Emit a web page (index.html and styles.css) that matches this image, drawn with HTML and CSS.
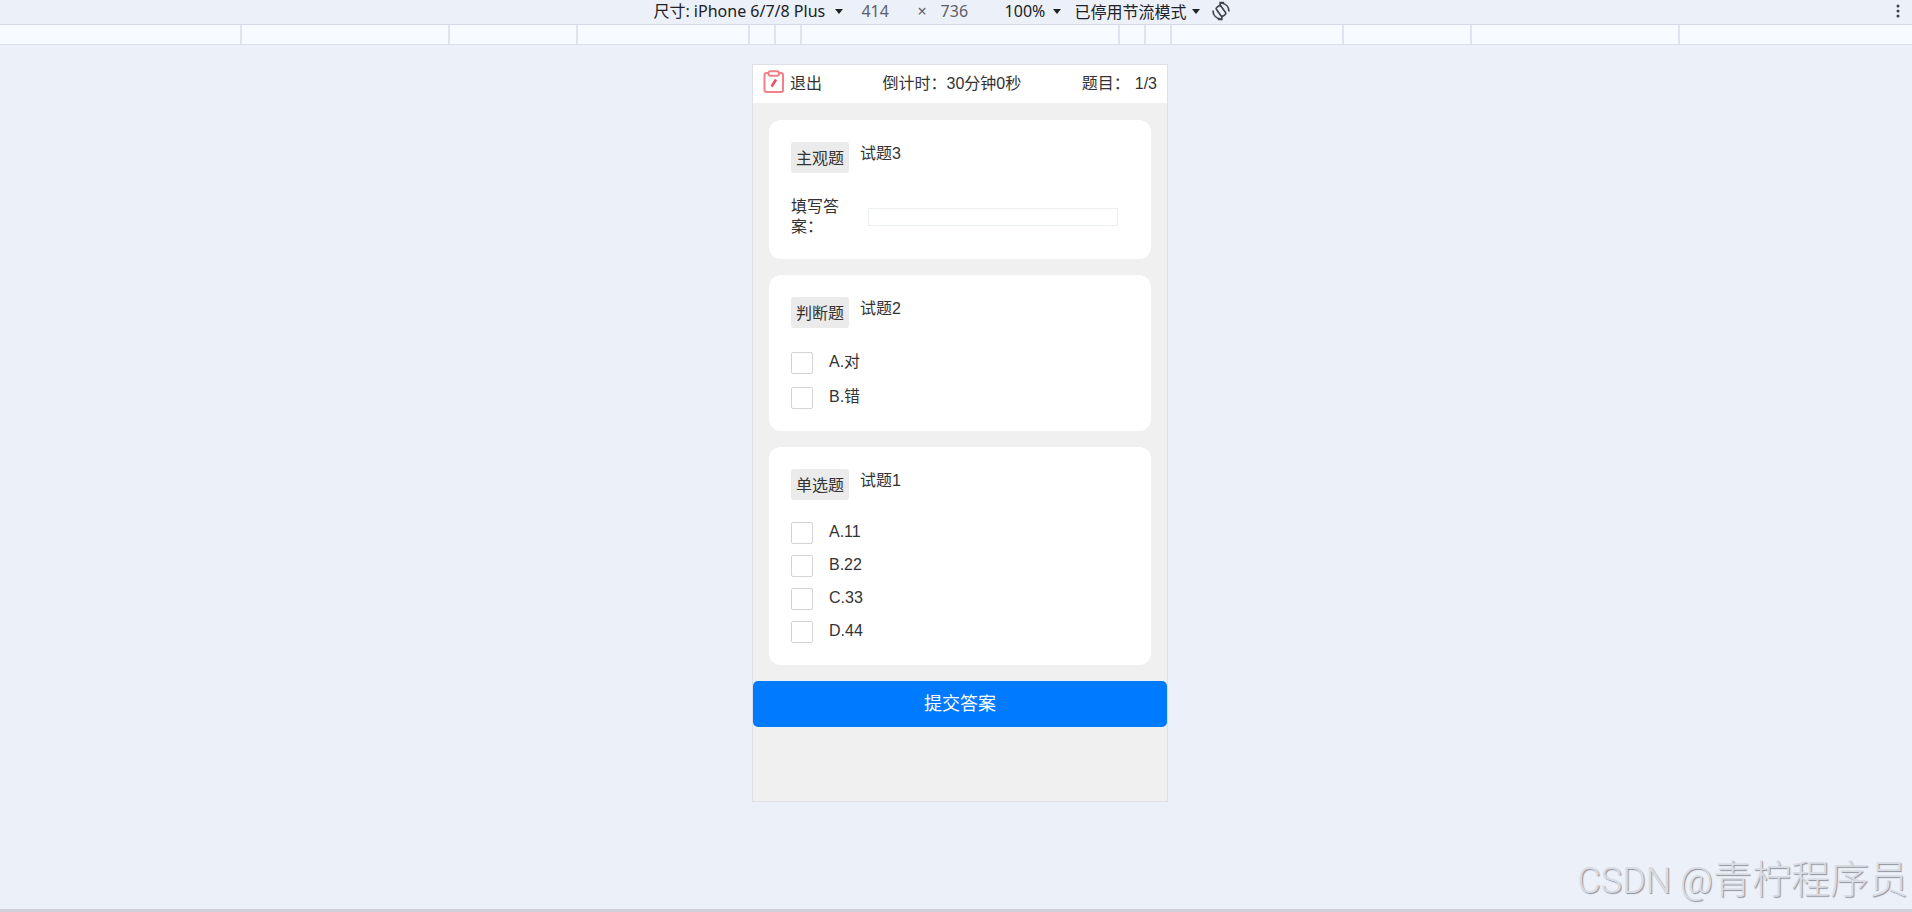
FILE: index.html
```
<!DOCTYPE html>
<html lang="zh-CN">
<head>
  <meta charset="UTF-8" />
  <meta name="viewport" content="width=device-width, initial-scale=1.0"/>
  <title>在线考试</title>
  <link rel="stylesheet" href="styles.css">
</head>
<body>
  <header class="toolbar">
    <span class="picker picker-device">
      <select aria-label="尺寸"><option>尺寸: iPhone 6/7/8 Plus</option></select>
    </span>
    <input class="size" type="text" value="414" aria-label="宽度">
    <span class="times">×</span>
    <input class="size" type="text" value="736" aria-label="高度">
    <span class="picker picker-zoom">
      <select aria-label="缩放"><option>100%</option></select>
    </span>
    <span class="picker picker-throttle">
      <select aria-label="节流"><option>已停用节流模式</option></select>
    </span>
    <button class="rotate" type="button" aria-label="旋转">
      <svg width="20" height="20" viewBox="0 0 20 20" fill="none" stroke="#41454c" stroke-width="1.7">
        <rect x="7.200" y="4.600" width="5.600" height="10.800" rx="1.500" transform="rotate(-35 10 10)"/>
        <path d="M2 9.500c0 4.500 3 8 8 8.500M10.800 14.200V18.300H6.800"/>
        <path d="M18 10.500c0-4.500-3-8-8-8.500M9.200 5.800V1.700H13.200"/>
      </svg>
    </button>
    <button class="more" type="button" aria-label="更多选项">
      <svg width="4" height="14" viewBox="0 0 4 14" fill="#3c4048">
        <circle cx="2" cy="2" r="1.500"/><circle cx="2" cy="7" r="1.500"/><circle cx="2" cy="12" r="1.500"/>
      </svg>
    </button>
  </header>

  <div class="ruler">
    <i class="laptop-l"></i><i class="laptop"></i><i class="tablet"></i><i class="mobile-l"></i><i class="mobile-m"></i><i class="mobile-m"></i>
    <i class="mobile-s"></i>
    <i class="mobile-m"></i><i class="mobile-m"></i><i class="mobile-l"></i><i class="tablet"></i><i class="laptop"></i><i class="laptop-l"></i>
  </div>

  <main class="stage">
    <div class="phone">
      <div class="exam-bar">
        <button class="exit" type="button">
          <svg width="22" height="24" viewBox="0 0 22 24" fill="none" stroke="#f0808a" stroke-width="2">
            <rect x="1.500" y="3" width="18.500" height="19" rx="2"/>
            <rect x="5.500" y="1.200" width="10.500" height="4.600" rx="2" fill="#fff"/>
            <path d="M13 9.500L8.600 16.500" stroke="#e8505e" stroke-width="2.600"/>
          </svg>
          退出
        </button>
        <span>倒计时：30分钟0秒</span>
        <span class="count">题目：<b>1/3</b></span>
      </div>

      <form class="questions">
        <section class="card">
          <div class="head"><span class="tag">主观题</span><span class="title">试题3</span></div>
          <div class="fill">
            <label for="answer">填写答案：</label>
            <input id="answer" type="text">
          </div>
        </section>

        <section class="card judge">
          <div class="head"><span class="tag">判断题</span><span class="title">试题2</span></div>
          <div class="options">
            <label><input type="checkbox">A.对</label>
            <label><input type="checkbox">B.错</label>
          </div>
        </section>

        <section class="card">
          <div class="head"><span class="tag">单选题</span><span class="title">试题1</span></div>
          <div class="options">
            <label><input type="checkbox">A.11</label>
            <label><input type="checkbox">B.22</label>
            <label><input type="checkbox">C.33</label>
            <label><input type="checkbox">D.44</label>
          </div>
        </section>

        <button class="submit" type="button">提交答案</button>
      </form>
    </div>
  </main>

  <div class="watermark">CSDN @<span>青柠程序员</span></div>
</body>
</html>
```
FILE: styles.css
```
* {
  box-sizing: border-box;
}

body {
  margin: 0;
  min-height: 100vh;
  display: flex;
  flex-direction: column;
  background: #ecf0f9;
  color: #333;
  font: 16px/20px "Liberation Sans", "Noto Sans CJK SC", sans-serif;
  border-bottom: 3px solid #d0d0dc;
}

button, input, select {
  margin: 0;
  padding: 0;
  border: none;
  background: none;
  color: inherit;
  font: inherit;
}

/* toolbar */
.toolbar {
  display: flex;
  align-items: center;
  justify-content: center;
  height: 25px;
  padding: 0 36px 2px 8px;
  border-bottom: 1px solid #d6dae8;
  font-family: "Noto Sans", "Noto Sans CJK SC", sans-serif;
  color: #202226;
  position: relative;
}

.picker {
  display: flex;
  align-items: center;
}

.picker select {
  appearance: none;
  flex: 1;
  min-width: 0;
  height: 22px;
}

.picker::after {
  content: "";
  border: 4px solid transparent;
  border-top: 5px solid #202226;
  border-bottom: none;
}

.picker-device {
  width: 190px;
}

.picker-zoom {
  width: 56px;
  margin-left: 34px;
}

.picker-throttle {
  width: 125px;
  margin-left: 14px;
  font-family: "Noto Sans CJK SC", sans-serif;
}

.size {
  width: 30px;
  height: 22px;
  margin-left: 18px;
  color: #5c6068;
}

.times {
  margin-left: 26px;
  color: #5c6068;
}

.times + .size {
  margin-left: 14px;
}

.rotate {
  display: flex;
  margin-left: 11px;
}

.more {
  position: absolute;
  right: 12px;
  top: 4px;
  display: flex;
}

/* ruler */
.ruler {
  display: flex;
  height: 20px;
  padding-left: 8px;
  background: #f7fbff;
  border-bottom: 1px solid #dcdfeb;
}

.ruler i {
  border-right: 2px solid #e0e2ef;
}

.ruler i:last-child {
  border-right: none;
}

.laptop-l {
  flex: 1;
}

.laptop {
  width: 208px;
}

.tablet {
  width: 128px;
}

.mobile-l {
  width: 172px;
}

.mobile-m {
  width: 26px;
}

.mobile-s {
  width: 318px;
}

/* phone */
.stage {
  flex: 1;
  display: flex;
  justify-content: center;
  align-items: flex-start;
  padding: 19px 0 40px 8px;
}

.phone {
  width: 416px;
  min-height: 738px;
  background: #f0f0f0;
  border: 1px solid #dfe0e6;
}

.exam-bar {
  display: flex;
  align-items: center;
  justify-content: space-between;
  height: 38px;
  padding: 0 10px;
  background: #fff;
}

.exit {
  display: flex;
  align-items: center;
  gap: 5px;
}

.exit svg {
  margin-bottom: 4px;
}

.count b {
  margin-left: 5px;
  font-weight: normal;
}

.questions {
  display: flex;
  flex-direction: column;
  gap: 16px;
  padding-top: 17px;
}

.card {
  margin: 0 16px;
  padding: 22px;
  background: #fff;
  border-radius: 12px;
}

.head {
  display: flex;
  gap: 11px;
}

.tag {
  height: 31px;
  padding: 7px 5px 4px;
  background: #ebebeb;
  border-radius: 3px;
}

.title {
  padding-top: 2px;
}

.fill {
  display: flex;
  align-items: center;
  gap: 17px;
  margin-top: 24px;
}

.fill label {
  width: 60px;
}

.fill input {
  flex: 1;
  min-width: 0;
  height: 18px;
  margin-right: 11px;
  border: 1px solid #eaeff0;
}

.options {
  display: flex;
  flex-direction: column;
  gap: 11px;
  margin-top: 22px;
}

.judge .options {
  gap: 13px;
  margin-top: 24px;
}

.options label {
  display: flex;
  gap: 16px;
  height: 22px;
}

.options input {
  appearance: none;
  width: 22px;
  height: 22px;
  border: 1px solid #d3d3d3;
  border-radius: 2px;
}

.submit {
  height: 46px;
  background: #007aff;
  border-radius: 5px;
  color: #fff;
  font-size: 18px;
}

.watermark {
  position: absolute;
  right: 4px;
  bottom: 7px;
  font: 300 36px/48px Roboto, "Noto Sans CJK SC", sans-serif;
  color: #d9dce4;
  text-shadow: 1px 1px 1px #8e9199;
}

.watermark span {
  font-size: 39px;
}
```
